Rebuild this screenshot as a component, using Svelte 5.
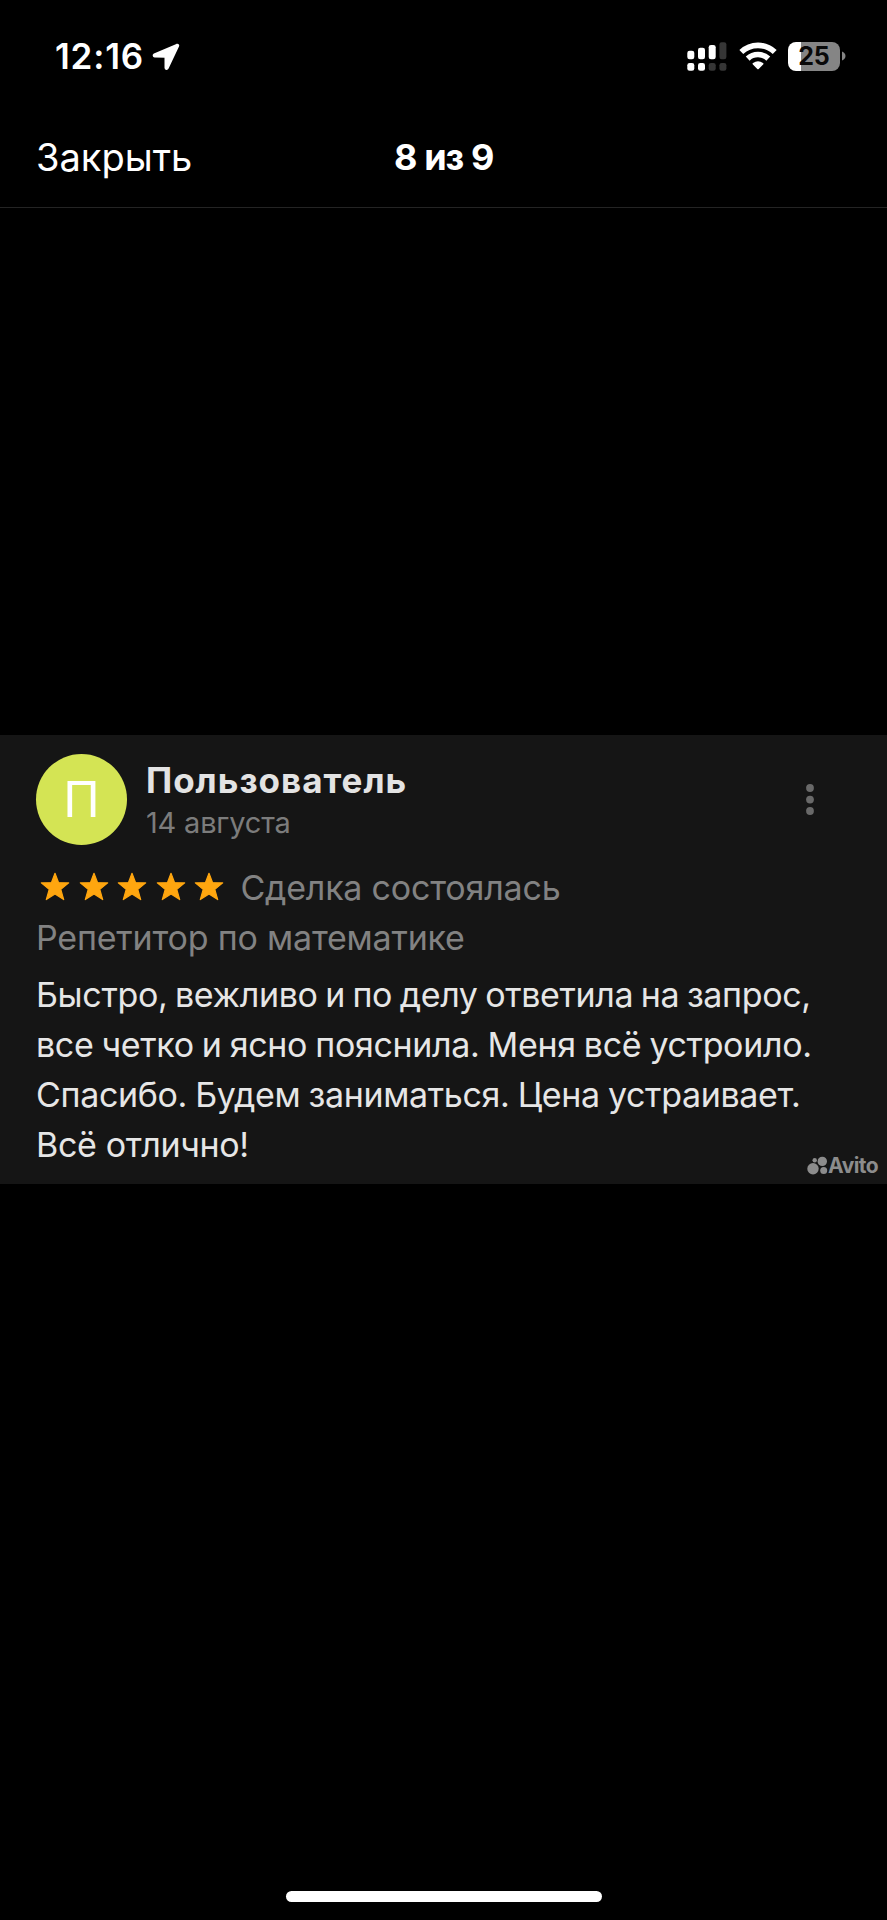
<script lang="ts">
    const stars = [0, 1, 2, 3, 4];

    const review = {
        name: "Пользователь",
        date: "14 августа",
        status: "Сделка состоялась",
        item: "Репетитор по математике",
    };

    // word gaps differ slightly from line to line
    const lines = [
        { text: "Быстро, вежливо и по делу ответила на запрос,", gap: -1.7 },
        { text: "все четко и ясно пояснила. Меня всё устроило.", gap: -1.1 },
        { text: "Спасибо. Будем заниматься. Цена устраивает.", gap: -1.1 },
        { text: "Всё отлично!", gap: 0 },
    ];
</script>

<div class="screen">
    <div class="status-bar">
        <div class="clock">
            <span class="time">12:16</span>
            <svg class="location" width="28" height="28" viewBox="0 0 28 28">
                <path
                    d="M24.8 1.8 2.3 11.5c-1 .5-.8 2 .3 2l10.9.3v10.9c0 1.5 1.600 1.700 2.200.4L26.100 3.100c.5-1.100-.3-1.700-1.300-1.300Z"
                    fill="#fff"
                    stroke="#fff"
                    stroke-width="2"
                    stroke-linejoin="round"
                />
            </svg>
        </div>

        <div class="indicators">
            <svg class="signal" width="40" height="30" viewBox="0 0 40 30">
                <g fill="#fff">
                    <rect x="0.3" y="9.8" width="7" height="8.5" rx="2.3" />
                    <rect x="11" y="6.8" width="7" height="11.5" rx="2.3" />
                    <rect x="21.7" y="4" width="7" height="14.3" rx="2.3" />
                    <rect x="0.3" y="22" width="7" height="7.8" rx="2.3" />
                    <rect x="11" y="22" width="7" height="7.8" rx="2.3" />
                </g>
                <g fill="#363636">
                    <rect x="32.4" y="1.3" width="7" height="17" rx="2.3" />
                    <rect x="21.7" y="22" width="7" height="7.8" rx="2.3" />
                    <rect x="32.4" y="22" width="7" height="7.8" rx="2.3" />
                </g>
            </svg>
            <svg class="wifi" width="38" height="28" viewBox="0 0 38 28">
                <g fill="none" stroke="#fff" stroke-width="5.6">
                    <path d="M2.3 10.1a24 24 0 0 1 33.4 0" />
                    <path d="M8.7 16.6a15 15 0 0 1 20.6 0" />
                </g>
                <path
                    d="M19 27.3a1 1 0 0 1-.7-.3l-4.400-4.400c-.5-.5-.5-1.100.1-1.500a8.400 8.400 0 0 1 10 0c.6.4.6 1 .1 1.500L19.700 27a1 1 0 0 1-.7.3Z"
                    fill="#fff"
                />
            </svg>
            <div class="battery">
                <div class="level">25</div>
                <svg width="4" height="10" viewBox="0 0 4 10">
                    <path d="M0 .5c2 .7 3.500 2.300 3.500 4.500S2 8.800 0 9.500Z" fill="#858585" />
                </svg>
            </div>
        </div>
    </div>

    <header class="nav">
        <span class="close">Закрыть</span>
        <h1 class="counter">8 из 9</h1>
        <span></span>
    </header>

    <main class="card">
        <div class="author">
            <div class="avatar">П</div>
            <div class="who">
                <div class="name">{review.name}</div>
                <div class="date">{review.date}</div>
            </div>
            <svg class="menu" width="10" height="34" viewBox="0 0 10 34">
                <circle cx="5" cy="5" r="3.9" />
                <circle cx="5" cy="16.6" r="3.9" />
                <circle cx="5" cy="28" r="3.9" />
            </svg>
        </div>

        <div class="rating">
            <div class="stars">
                {#each stars as star (star)}
                    <svg width="30" height="29" viewBox="0 0 30 29">
                        <path
                            d="M15 1.300 18.500 10.500 28.700 10.900 20.800 17.400 23.700 27.600 15 22 6.300 27.600 9.200 17.400 1.300 10.900 11.500 10.500Z"
                            fill="#ffa60f"
                            stroke="#ffa60f"
                            stroke-width="1.2"
                            stroke-linejoin="round"
                        />
                    </svg>
                {/each}
            </div>
            <span class="deal">{review.status}</span>
        </div>
        <div class="item">{review.item}</div>

        <div class="text">
            {#each lines as line}
                <div style="word-spacing: {line.gap}px">{line.text}</div>
            {/each}
        </div>

        <div class="watermark">
            <svg width="21" height="20" viewBox="0 0 21 20">
                <circle cx="6" cy="12.7" r="5.7" />
                <circle cx="15.3" cy="5.4" r="4.7" />
                <circle cx="16.7" cy="14.5" r="3.5" />
                <circle cx="7.7" cy="4.2" r="2.2" />
            </svg>
            <span>Avito</span>
        </div>
    </main>

    <div class="home-indicator"></div>
</div>

<style>
    :global(body) {
        background: #000;
    }

    .screen {
        display: flex;
        flex-direction: column;
        width: 887px;
        height: 1920px;
        overflow: hidden;
        background: #000;
        color: #fff;
        font-family: Inter, "Noto Sans", sans-serif;
    }

    svg {
        display: block;
        flex: none;
    }

    .status-bar {
        display: flex;
        align-items: center;
        justify-content: space-between;
        height: 112px;
        padding: 0 41px 0 55px;
    }

    .clock {
        display: flex;
        align-items: center;
        gap: 8px;
    }

    .time {
        font-size: 35px;
        font-weight: 600;
        line-height: 44px;
        letter-spacing: 0.8px;
    }

    .location {
        margin-top: 1px;
    }

    .indicators {
        display: flex;
        align-items: center;
    }

    .wifi {
        margin-left: 12px;
    }

    .battery {
        display: flex;
        align-items: center;
        gap: 2px;
        margin-left: 11px;
    }

    .level {
        width: 52px;
        height: 29px;
        border-radius: 8px;
        background: linear-gradient(90deg, #fff 13px, #858585 13px);
        color: #090909;
        font-size: 25px;
        font-weight: 700;
        line-height: 29px;
        text-align: center;
    }

    .nav {
        display: grid;
        grid-template-columns: 1fr auto 1fr;
        align-items: center;
        box-sizing: border-box;
        height: 96px;
        padding: 0 36px 5px;
        border-bottom: 1px solid #242424;
    }

    .close {
        font-size: 38px;
        line-height: 48px;
    }

    .counter {
        margin: 0;
        font-size: 36px;
        font-weight: 700;
        line-height: 48px;
        letter-spacing: -1.4px;
        word-spacing: 1.2px;
    }

    .card {
        position: relative;
        box-sizing: border-box;
        height: 449px;
        margin-top: 527px;
        padding: 19px 36px 0;
        background: #151515;
    }

    .author {
        display: flex;
        align-items: center;
        height: 91px;
    }

    .avatar {
        flex: none;
        width: 91px;
        height: 91px;
        border-radius: 50%;
        background: #d4e454;
        font-size: 49px;
        line-height: 91px;
        text-align: center;
    }

    .who {
        flex: 1;
        padding-top: 1px;
        margin-left: 19px;
    }

    .name {
        color: #e3e3e3;
        font-size: 35px;
        font-weight: 700;
        line-height: 44px;
        letter-spacing: 1px;
    }

    .date {
        color: #7c7c7c;
        font-size: 29px;
        line-height: 41px;
        letter-spacing: -0.2px;
    }

    .menu {
        margin-right: 36px;
        fill: #696969;
    }

    .rating {
        display: flex;
        align-items: center;
        height: 50px;
        margin-top: 18px;
        padding-left: 4px;
    }

    .stars {
        display: flex;
        gap: 8.6px;
        margin-top: -4px;
    }

    .deal {
        margin-left: 16px;
    }

    .deal,
    .item {
        color: #828282;
        font-size: 34px;
        line-height: 50px;
        letter-spacing: -0.2px;
    }

    .text {
        margin-top: 7px;
        color: #e6e6e6;
        font-size: 34px;
        line-height: 50px;
        letter-spacing: -0.34px;
        white-space: nowrap;
    }

    .watermark {
        position: absolute;
        right: 9px;
        bottom: 7px;
        display: flex;
        align-items: center;
        color: #8c8c8c;
        font-size: 21px;
        font-weight: 700;
        line-height: 22px;
        letter-spacing: -0.6px;
    }

    .watermark svg {
        fill: currentColor;
    }

    .home-indicator {
        width: 316px;
        height: 11px;
        margin: auto auto 18px;
        border-radius: 6px;
        background: #fff;
    }
</style>
